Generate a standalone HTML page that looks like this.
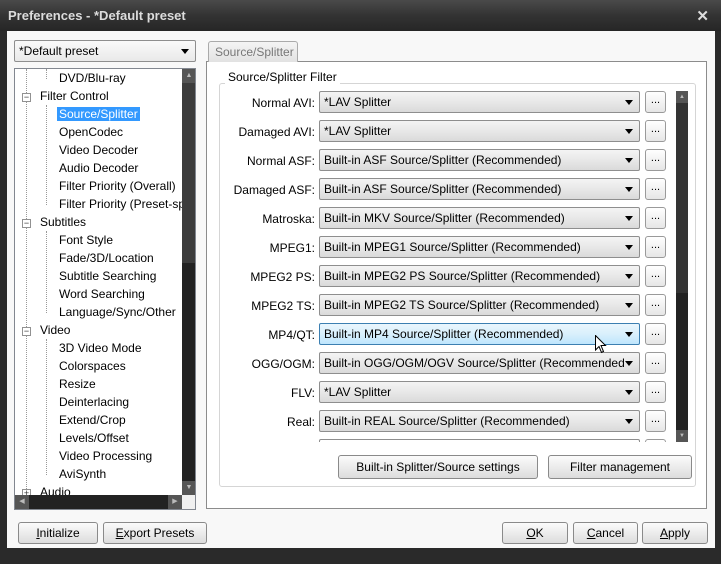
<!DOCTYPE html>
<html><head><meta charset="utf-8"><style>
*{box-sizing:border-box;margin:0;padding:0}
body{width:721px;height:564px;background:#2a2a2a;font-family:"Liberation Sans",sans-serif;font-size:12px;color:#000;position:relative;overflow:hidden}
.a{position:absolute}
.title{left:0;top:0;width:721px;height:31px;background:linear-gradient(#4a4a4a,#333 50%,#262626);}
.title span{position:absolute;left:8px;top:8px;color:#dcdcdc;font-weight:bold;font-size:13px}
.close{right:12px;top:7px;color:#ddd;font-size:15px;font-weight:bold}
.win{left:7px;top:31px;width:708px;height:517px;background:#f8f8f8}
.btn{position:absolute;height:22px;border:1px solid #8a8a8a;border-radius:3px;background:linear-gradient(#fbfbfb,#ececec 50%,#dcdcdc);text-align:center;line-height:20px;font-size:12px}
.combo{position:absolute;height:22px;border:1px solid #8e8e8e;border-radius:2px;background:linear-gradient(#f4f4f4,#e8e8e8 50%,#dadada);padding-left:4px;line-height:20px;white-space:nowrap;overflow:hidden}
.combo:after{content:"";position:absolute;right:6px;top:8px;border-left:4px solid transparent;border-right:4px solid transparent;border-top:5px solid #000}
.lbl{position:absolute;text-align:right;width:100px;left:215px}
.dots{position:absolute;left:645px;width:21px;height:22px;border:1px solid #9a9a9a;border-radius:3px;background:linear-gradient(#fff,#e6e6e6);text-align:center;line-height:16px;font-size:11px}
.tree{left:14px;top:68px;width:182px;height:442px;background:#fff;border:1px solid #828790;overflow:hidden}
.ti{position:absolute;white-space:nowrap}
.sel{background:#3399ff;color:#fff;padding:0 2px;margin-left:-2px}
.box{position:absolute;width:9px;height:9px;border:1px solid #919191;background:#fff;font-size:9px;line-height:7px;text-align:center;color:#333}
</style></head><body>
<div class="a title"><span>Preferences - *Default preset</span><div class="a close">✕</div></div>
<div class="a win"></div>
<div class="combo" style="left:14px;top:40px;width:182px;height:22px;background:linear-gradient(#fafafa,#e9e9e9)">*Default preset</div>
<div class="a tree">
 <div class="a" style="left:11px;top:0;height:426px;border-left:1px dotted #999"></div>
 <div class="a" style="left:31px;top:0;height:10px;border-left:1px dotted #999"></div>
 <div class="a" style="left:31px;top:36px;height:100px;border-left:1px dotted #999"></div>
 <div class="a" style="left:31px;top:162px;height:82px;border-left:1px dotted #999"></div>
 <div class="a" style="left:31px;top:270px;height:136px;border-left:1px dotted #999"></div>
 <div class="ti" style="left:44px;top:2px">DVD/Blu-ray</div>
 <div class="box" style="left:7px;top:24px">−</div><div class="ti" style="left:25px;top:20px">Filter Control</div>
 <div class="ti" style="left:44px;top:38px"><span class="sel">Source/Splitter</span></div>
 <div class="ti" style="left:44px;top:56px">OpenCodec</div>
 <div class="ti" style="left:44px;top:74px">Video Decoder</div>
 <div class="ti" style="left:44px;top:92px">Audio Decoder</div>
 <div class="ti" style="left:44px;top:110px">Filter Priority (Overall)</div>
 <div class="ti" style="left:44px;top:128px">Filter Priority (Preset-sp</div>
 <div class="box" style="left:7px;top:150px">−</div><div class="ti" style="left:25px;top:146px">Subtitles</div>
 <div class="ti" style="left:44px;top:164px">Font Style</div>
 <div class="ti" style="left:44px;top:182px">Fade/3D/Location</div>
 <div class="ti" style="left:44px;top:200px">Subtitle Searching</div>
 <div class="ti" style="left:44px;top:218px">Word Searching</div>
 <div class="ti" style="left:44px;top:236px">Language/Sync/Other</div>
 <div class="box" style="left:7px;top:258px">−</div><div class="ti" style="left:25px;top:254px">Video</div>
 <div class="ti" style="left:44px;top:272px">3D Video Mode</div>
 <div class="ti" style="left:44px;top:290px">Colorspaces</div>
 <div class="ti" style="left:44px;top:308px">Resize</div>
 <div class="ti" style="left:44px;top:326px">Deinterlacing</div>
 <div class="ti" style="left:44px;top:344px">Extend/Crop</div>
 <div class="ti" style="left:44px;top:362px">Levels/Offset</div>
 <div class="ti" style="left:44px;top:380px">Video Processing</div>
 <div class="ti" style="left:44px;top:398px">AviSynth</div>
 <div class="box" style="left:7px;top:420px">+</div><div class="ti" style="left:25px;top:416px">Audio</div>
 <div class="a" style="left:167px;top:0;width:14px;height:426px;background:#222"></div>
 <div class="a" style="left:167px;top:14px;width:14px;height:180px;background:#3c3c3c"></div>
 <div class="a" style="left:167px;top:0;width:14px;height:14px;background:#555;font-size:7px;text-align:center;line-height:14px;color:#bbb">▲</div>
 <div class="a" style="left:167px;top:412px;width:14px;height:14px;background:#555;font-size:7px;text-align:center;line-height:14px;color:#bbb">▼</div>
 <div class="a" style="left:0;top:426px;width:167px;height:14px;background:#222"></div>
 <div class="a" style="left:0;top:426px;width:14px;height:14px;background:#555;font-size:7px;text-align:center;line-height:14px;color:#bbb">◀</div>
 <div class="a" style="left:153px;top:426px;width:14px;height:14px;background:#555;font-size:7px;text-align:center;line-height:14px;color:#bbb">▶</div>
 <div class="a" style="left:167px;top:426px;width:14px;height:14px;background:#f0f0f0"></div>
</div>
<!-- tab -->
<div class="a" style="left:206px;top:61px;width:501px;height:448px;background:#fff;border:1px solid #8c8c8c"></div>
<div class="a" style="left:208px;top:41px;width:90px;height:21px;border:1px solid #aaa;border-bottom:none;border-radius:3px 3px 0 0;background:linear-gradient(#f4f4f4,#e2e2e2);color:#777;padding:3px 0 0 6px">Source/Splitter</div>
<div class="a" style="left:219px;top:83px;width:477px;height:404px;border:1px solid #d5d5d5;border-radius:3px"></div>
<div class="a" style="left:225px;top:70px;background:#fff;padding:0 3px">Source/Splitter Filter</div>
<div class="lbl" style="top:96px">Normal AVI:</div><div class="combo" style="left:319px;top:91px;width:321px">*LAV Splitter</div><div class="dots" style="top:91px">...</div>
<div class="lbl" style="top:125px">Damaged AVI:</div><div class="combo" style="left:319px;top:120px;width:321px">*LAV Splitter</div><div class="dots" style="top:120px">...</div>
<div class="lbl" style="top:154px">Normal ASF:</div><div class="combo" style="left:319px;top:149px;width:321px">Built-in ASF Source/Splitter (Recommended)</div><div class="dots" style="top:149px">...</div>
<div class="lbl" style="top:183px">Damaged ASF:</div><div class="combo" style="left:319px;top:178px;width:321px">Built-in ASF Source/Splitter (Recommended)</div><div class="dots" style="top:178px">...</div>
<div class="lbl" style="top:212px">Matroska:</div><div class="combo" style="left:319px;top:207px;width:321px">Built-in MKV Source/Splitter (Recommended)</div><div class="dots" style="top:207px">...</div>
<div class="lbl" style="top:241px">MPEG1:</div><div class="combo" style="left:319px;top:236px;width:321px">Built-in MPEG1 Source/Splitter (Recommended)</div><div class="dots" style="top:236px">...</div>
<div class="lbl" style="top:270px">MPEG2 PS:</div><div class="combo" style="left:319px;top:265px;width:321px">Built-in MPEG2 PS Source/Splitter (Recommended)</div><div class="dots" style="top:265px">...</div>
<div class="lbl" style="top:299px">MPEG2 TS:</div><div class="combo" style="left:319px;top:294px;width:321px">Built-in MPEG2 TS Source/Splitter (Recommended)</div><div class="dots" style="top:294px">...</div>
<div class="lbl" style="top:328px">MP4/QT:</div><div class="combo" style="left:319px;top:323px;width:321px;border-color:#3c7fb1;background:linear-gradient(#eaf6fd,#d9f0fc 50%,#bee6fd)">Built-in MP4 Source/Splitter (Recommended)</div><div class="dots" style="top:323px">...</div>
<div class="lbl" style="top:357px">OGG/OGM:</div><div class="combo" style="left:319px;top:352px;width:321px;padding-right:18px">Built-in OGG/OGM/OGV Source/Splitter (Recommended</div><div class="dots" style="top:352px">...</div>
<div class="lbl" style="top:386px">FLV:</div><div class="combo" style="left:319px;top:381px;width:321px">*LAV Splitter</div><div class="dots" style="top:381px">...</div>
<div class="lbl" style="top:415px">Real:</div><div class="combo" style="left:319px;top:410px;width:321px">Built-in REAL Source/Splitter (Recommended)</div><div class="dots" style="top:410px">...</div>
<div class="a" style="left:319px;top:439px;width:321px;height:3px;border:1px solid #8e8e8e;border-bottom:none;border-radius:2px 2px 0 0"></div>
<div class="a" style="left:645px;top:439px;width:21px;height:3px;border:1px solid #9a9a9a;border-bottom:none;border-radius:3px 3px 0 0"></div>
<svg class="a" style="left:595px;top:335px" width="12" height="19" viewBox="0 0 12 19"><path d="M0.5 0.5 L0.5 15 L4 11.5 L6.5 17.5 L8.5 16.5 L6 10.5 L10.5 10.5 Z" fill="#fff" stroke="#000"/></svg>
<div class="a" style="left:676px;top:91px;width:12px;height:351px;background:#222"></div>
<div class="a" style="left:676px;top:91px;width:12px;height:12px;background:#555;font-size:6px;text-align:center;line-height:12px;color:#bbb">▲</div>
<div class="a" style="left:676px;top:103px;width:12px;height:190px;background:#333"></div>
<div class="a" style="left:676px;top:430px;width:12px;height:12px;background:#555;font-size:6px;text-align:center;line-height:12px;color:#bbb">▼</div>
<div class="btn" style="left:338px;top:455px;width:200px;height:24px;line-height:22px">Built-in Splitter/Source settings</div>
<div class="btn" style="left:548px;top:455px;width:144px;height:24px;line-height:22px">Filter management</div>
<div class="btn" style="left:18px;top:522px;width:80px"><u>I</u>nitialize</div>
<div class="btn" style="left:103px;top:522px;width:104px"><u>E</u>xport Presets</div>
<div class="btn" style="left:502px;top:522px;width:66px"><u>O</u>K</div>
<div class="btn" style="left:573px;top:522px;width:65px"><u>C</u>ancel</div>
<div class="btn" style="left:642px;top:522px;width:66px"><u>A</u>pply</div>
</body></html>
